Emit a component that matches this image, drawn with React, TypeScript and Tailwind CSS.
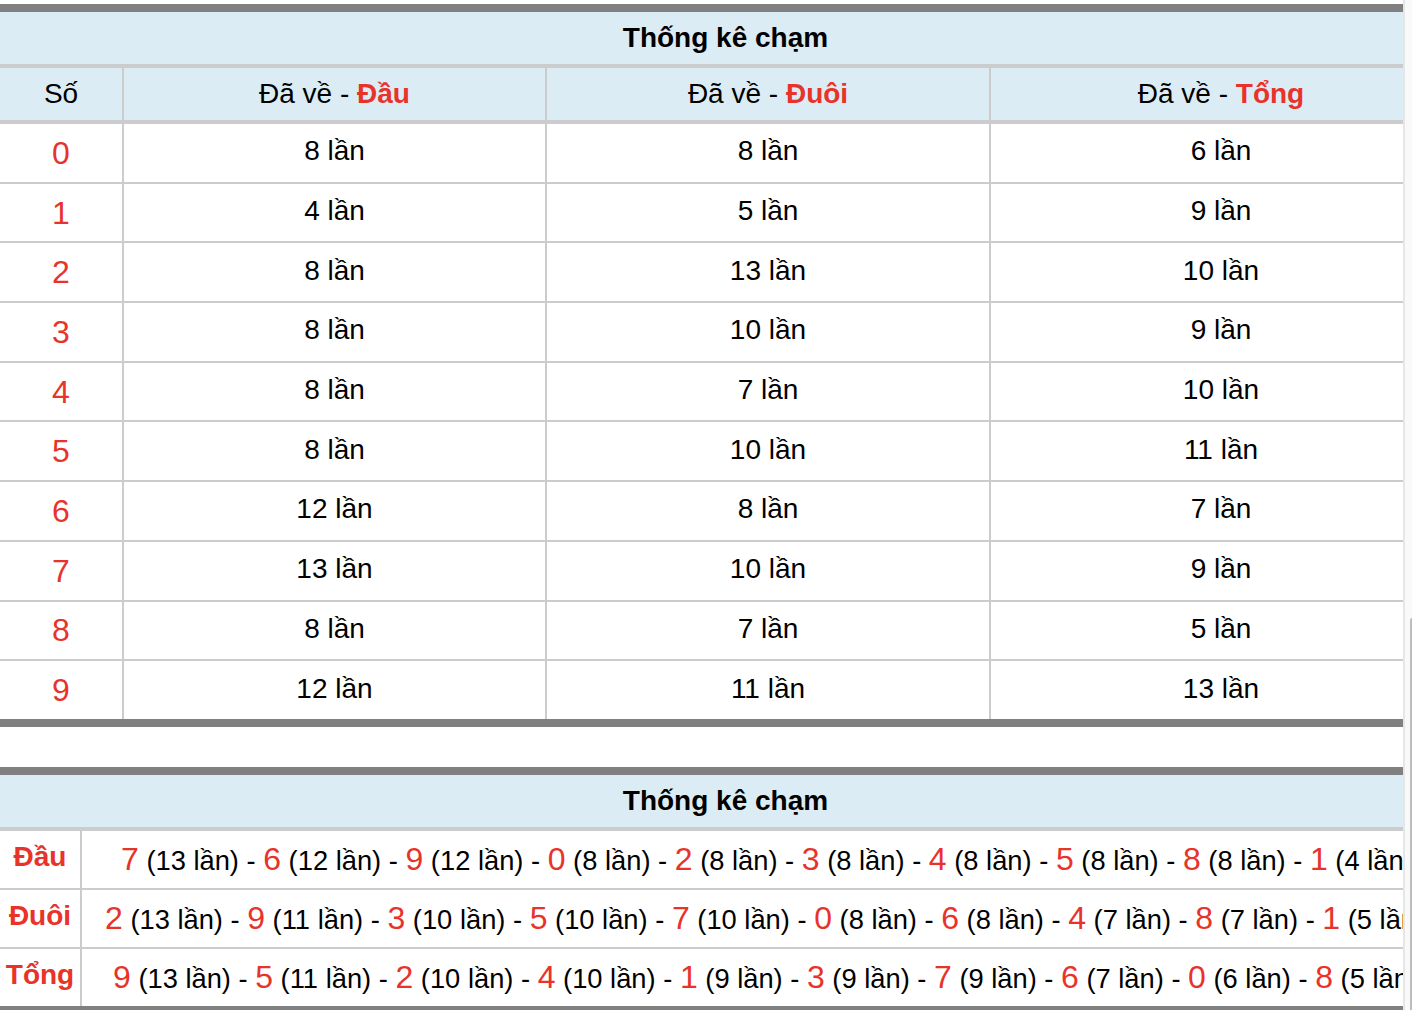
const rows = [
  { so: 0, dau: 8, duoi: 8, tong: 6 },
  { so: 1, dau: 4, duoi: 5, tong: 9 },
  { so: 2, dau: 8, duoi: 13, tong: 10 },
  { so: 3, dau: 8, duoi: 10, tong: 9 },
  { so: 4, dau: 8, duoi: 7, tong: 10 },
  { so: 5, dau: 8, duoi: 10, tong: 11 },
  { so: 6, dau: 12, duoi: 8, tong: 7 },
  { so: 7, dau: 13, duoi: 10, tong: 9 },
  { so: 8, dau: 8, duoi: 7, tong: 5 },
  { so: 9, dau: 12, duoi: 11, tong: 13 },
]

const summary = [
  {
    label: 'Đầu',
    pad: 'pl-[39px]',
    items: [[7, 13], [6, 12], [9, 12], [0, 8], [2, 8], [3, 8], [4, 8], [5, 8], [8, 8], [1, 4]],
  },
  {
    label: 'Đuôi',
    pad: 'pl-[23px]',
    items: [[2, 13], [9, 11], [3, 10], [5, 10], [7, 10], [0, 8], [6, 8], [4, 7], [8, 7], [1, 5]],
  },
  {
    label: 'Tổng',
    pad: 'pl-[31px]',
    items: [[9, 13], [5, 11], [2, 10], [4, 10], [1, 9], [3, 9], [7, 9], [6, 7], [0, 6], [8, 5]],
  },
]

function Title() {
  return (
    <div className="h-[52px] flex items-center justify-center bg-[#dcecf5] border-b-4 border-[#cccccc] box-content font-bold text-[28px]">
      Thống kê chạm
    </div>
  )
}

export default function App() {
  return (
    <div className="flex w-[1412px] h-[1010px] overflow-hidden bg-white text-black font-['Liberation_Sans',Arial,sans-serif]">
      <div className="w-[1403px] shrink-0 overflow-hidden pt-[4px]">
        {/* bảng thống kê chạm */}
        <div className="w-[1451px] border-t-8 border-b-8 border-[#808080]">
          <Title />
          <div className="flex h-[52px] box-content bg-[#dcecf5] border-b-4 border-[#cccccc] text-[28px]">
            <div className="w-[122px] flex items-center justify-center">Số</div>
            <div className="w-[423px] border-l-2 border-[#cccccc] flex items-center justify-center">
              Đã về -&nbsp;<b className="text-[#e8332a]">Đầu</b>
            </div>
            <div className="w-[444px] border-l-2 border-[#cccccc] flex items-center justify-center">
              Đã về -&nbsp;<b className="text-[#e8332a]">Đuôi</b>
            </div>
            <div className="w-[462px] border-l-2 border-[#cccccc] flex items-center justify-center">
              Đã về -&nbsp;<b className="text-[#e8332a]">Tổng</b>
            </div>
          </div>
          {rows.map((r, i) => (
            <div
              key={r.so}
              className={`flex h-[57.7px] box-content text-[28px] ${i < rows.length - 1 ? 'border-b-2 border-[#cccccc]' : ''}`}
            >
              <div className="w-[122px] flex items-center justify-center text-[32px] text-[#e8332a]">{r.so}</div>
              <div className="w-[423px] border-l-2 border-[#cccccc] flex items-center justify-center pb-[3px]">{r.dau} lần</div>
              <div className="w-[444px] border-l-2 border-[#cccccc] flex items-center justify-center pb-[3px]">{r.duoi} lần</div>
              <div className="w-[462px] border-l-2 border-[#cccccc] flex items-center justify-center pb-[3px]">{r.tong} lần</div>
            </div>
          ))}
        </div>

        {/* bảng tóm tắt */}
        <div className="mt-[40px] w-[1451px] border-t-8 border-b-8 border-[#808080]">
          <Title />
          {summary.map((s, i) => (
            <div
              key={s.label}
              className={`flex h-[57px] box-content ${i < summary.length - 1 ? 'border-b-2 border-[#cccccc]' : ''}`}
            >
              <div className="w-[80px] shrink-0 flex items-center justify-center pb-[4px] font-bold text-[28px] text-[#e8332a]">
                {s.label}
              </div>
              <div className={`flex-1 border-l-2 border-[#cccccc] flex items-center whitespace-nowrap text-[27.3px] ${s.pad}`}>
                <span>
                  {s.items.map(([n, c], j) => (
                    <span key={j}>
                      {j > 0 && ' - '}
                      <span className="text-[32px] text-[#e8332a]">{n}</span> ({c} lần)
                    </span>
                  ))}
                </span>
              </div>
            </div>
          ))}
        </div>
      </div>

      {/* thanh cuộn */}
      <div className="w-[9px] shrink-0 flex flex-col bg-[#f9f9f9] border-l-2 border-[#e6e6e6]">
        <div className="h-[618px] shrink-0" />
        <div className="flex-1 ml-[5px] border-l-2 border-t border-[#bdbdbd] rounded-tl-[3px]" />
      </div>
    </div>
  )
}
